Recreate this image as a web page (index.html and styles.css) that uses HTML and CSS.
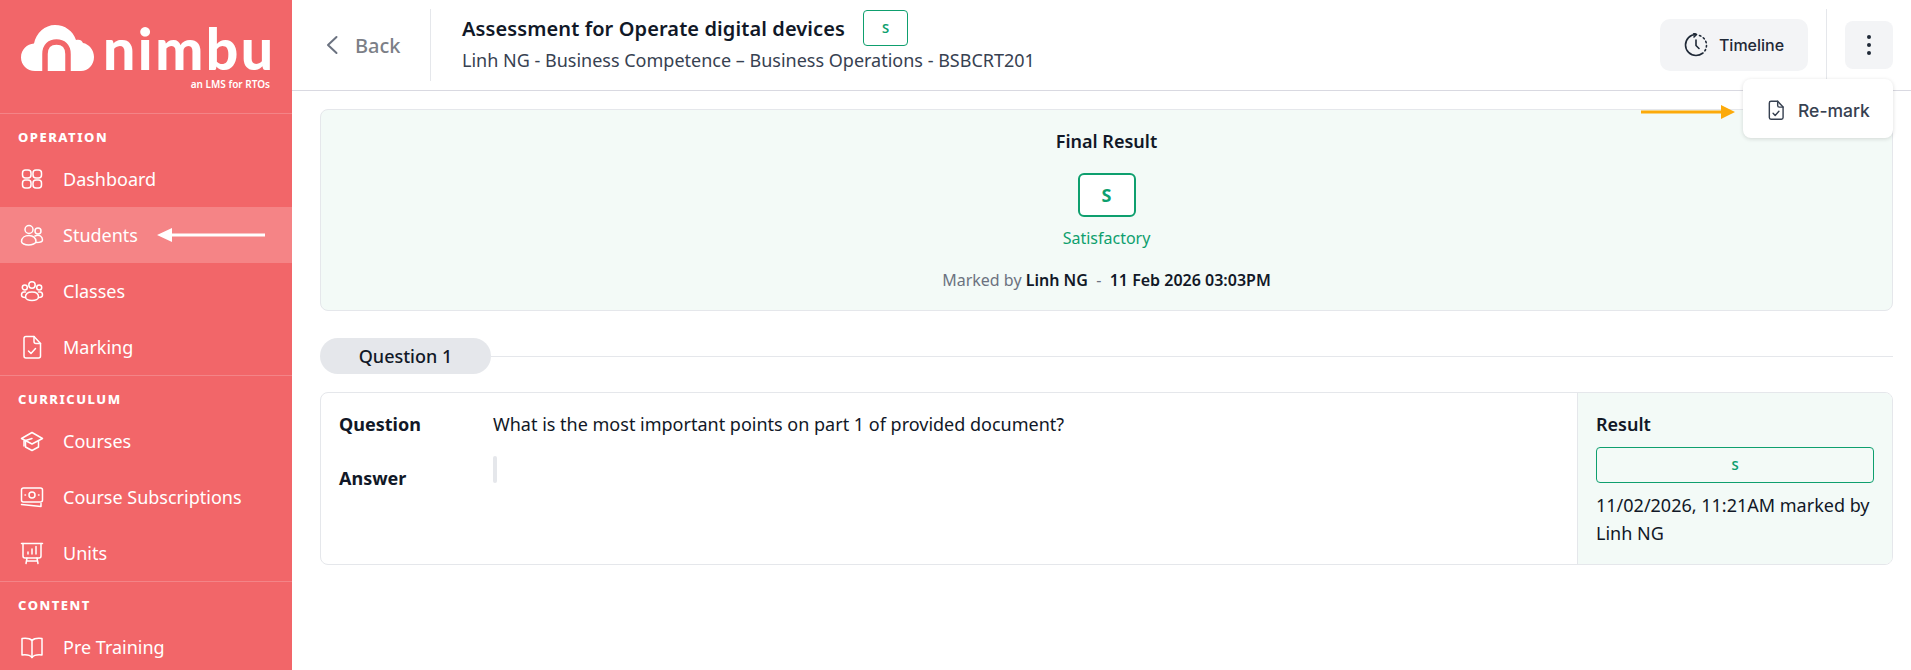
FILE: index.html
```html
<!DOCTYPE html>
<html lang="en">
<head>
<meta charset="utf-8">
<title>Assessment</title>
<link rel="stylesheet" href="styles.css">
</head>
<body>
<div class="app">
  <aside class="sidebar">
    <div class="logo">
      <div class="logo-main">
        <svg class="logo-cloud" viewBox="0 0 73 46" width="73" height="46">
          <path fill="#fff" d="M14 46C6 46 0 40 0 32.500C0 24.500 6 19 13 18.500C15 8 24 0 34 0C44 0 52 6 55 15C58 14 61 15 62 18C68 19 73 25 73 32C73 40 67 46 60 46Z"/>
          <path fill="none" stroke="#f26669" stroke-width="5.500" d="M24 47V29C24 21 29 17 35.500 17C42 17 47 21 47 29V47"/>
        </svg>
        <span class="logo-word">nimbu</span>
      </div>
      <div class="logo-tag">an LMS for RTOs</div>
    </div>

    <section class="nav-section nav-first">
      <h3 class="nav-title">OPERATION</h3>
      <a class="nav-item">
        <svg class="nav-icon" viewBox="0 0 24 24"><rect x="2.500" y="3" width="8.500" height="8" rx="3"/><rect x="13" y="3" width="8.500" height="8" rx="3"/><rect x="2.500" y="13" width="8.500" height="8" rx="3"/><rect x="13" y="13" width="8.500" height="8" rx="3"/></svg>
        <span>Dashboard</span>
      </a>
      <a class="nav-item active">
        <svg class="nav-icon" viewBox="0 0 24 24"><circle cx="9" cy="6.500" r="4"/><circle cx="18" cy="8" r="3"/><path d="M1.500 18.500C1.500 14.500 5 12.500 9 12.500C13 12.500 16 15 16 18.500C16 20.500 12 22 8.500 22C5 22 1.500 20.500 1.500 18.500Z"/><path d="M15 13C17 12 19 12 20.500 13C22 14 22.500 15.500 22.500 17C22.500 18.500 20 19.500 16.500 19.500"/></svg>
        <span>Students</span>
      </a>
      <a class="nav-item">
        <svg class="nav-icon" viewBox="0 0 24 24"><circle cx="12" cy="6" r="3.200"/><circle cx="4.800" cy="8.500" r="2.500"/><circle cx="19.200" cy="8.500" r="2.500"/><path d="M5.500 18C5.500 14.500 8.500 13 12 13C15.500 13 18.500 14.500 18.500 18C18.500 20 15.500 21.500 12 21.500C8.500 21.500 5.500 20 5.500 18Z"/><path d="M5.500 13H4C2.500 13 1.500 14.500 1.500 16C1.500 17.500 3 18.500 5.500 18.500"/><path d="M18.500 13H20C21.500 13 22.500 14.500 22.500 16C22.500 17.500 21 18.500 18.500 18.500"/></svg>
        <span>Classes</span>
      </a>
      <a class="nav-item">
        <svg class="nav-icon" viewBox="0 0 24 24"><path d="M6 1.500H14L20.500 8.500V21C20.500 22 19.500 23 18.500 23H6C5 23 4 22 4 21V3.500C4 2.500 5 1.500 6 1.500Z"/><path d="M14 1.500V6.500C14 7.700 15 8.500 16 8.500H20.500"/><path d="M8.500 16L11 18.500L15.500 13.500"/></svg>
        <span>Marking</span>
      </a>
    </section>

    <section class="nav-section">
      <h3 class="nav-title">CURRICULUM</h3>
      <a class="nav-item">
        <svg class="nav-icon" viewBox="0 0 24 24"><path d="M12 3.500L22.500 9.500L12 15L1.500 9.500Z"/><path d="M5.500 12V18L12 21.500L18.500 18V12"/><path d="M12 9.500L4 12V17"/></svg>
        <span>Courses</span>
      </a>
      <a class="nav-item">
        <svg class="nav-icon" viewBox="0 0 24 24"><rect x="1.500" y="3" width="21" height="14" rx="2"/><circle cx="12" cy="10" r="3"/><path d="M5 10H5.500M18.500 10H19"/><path d="M1.500 19.500L21 21.500V18.500"/></svg>
        <span>Course Subscriptions</span>
      </a>
      <a class="nav-item">
        <svg class="nav-icon" viewBox="0 0 24 24"><path d="M1.500 2.500H22.500"/><path d="M3 2.500V15C3 16 4 17 5 17H19C20 17 21 16 21 15V2.500"/><path d="M8 13V11M12 13V8M16 13V5.500"/><path d="M7 17L6 22.500M17 17L18 22.500M6.500 20H17.500"/></svg>
        <span>Units</span>
      </a>
    </section>

    <section class="nav-section">
      <h3 class="nav-title">CONTENT</h3>
      <a class="nav-item">
        <svg class="nav-icon" viewBox="0 0 24 24"><path d="M12 5.500C10 3.500 6 3 2 3.500V20C6 19.500 10 20 12 22.500C14 20 18 19.500 22 20V3.500C18 3 14 3.500 12 5.500Z"/><path d="M12 5.500V22.500"/></svg>
        <span>Pre Training</span>
      </a>
    </section>
    <svg class="side-arrow" viewBox="0 0 108 14" width="108" height="14"><path fill="#fff" d="M0 7L15 0V5.500H108V8.500H15V14Z"/></svg>
  </aside>

  <main class="main">
    <header class="topbar">
      <a class="back">
        <svg class="back-icon" viewBox="0 0 12 20" width="12" height="20"><path d="M10.500 2L2 10L10.500 18"/></svg>
        <span>Back</span>
      </a>
      <div class="heading">
        <div class="heading-row">
          <h1 class="title">Assessment for Operate digital devices</h1>
          <span class="badge-small">S</span>
        </div>
        <p class="subtitle">Linh NG - Business Competence – Business Operations - BSBCRT201</p>
      </div>
      <button class="timeline-btn">
        <svg class="timeline-icon" viewBox="0 0 24 24" width="24" height="24"><path d="M12 1.500C6 1.500 1.500 6.200 1.500 12C1.500 17.800 6.200 22.500 12 22.500C14.500 22.500 17 21.500 19 20"/><path d="M9.500 0L12.500 1.500L10 4" /><path d="M12 7V12.500L15 15.500"/><path stroke-dasharray="1.500 2.800" d="M15.500 2.500C19.500 4 22.500 7.500 22.500 12C22.500 14.500 21.800 16.500 20.500 18.500"/></svg>
        <span>Timeline</span>
      </button>
      <div class="kebab-wrap">
        <button class="kebab" aria-label="More">
          <i></i><i></i><i></i>
        </button>
      </div>
      <div class="menu">
        <svg class="menu-icon" viewBox="0 0 24 24" width="20" height="20"><path d="M6 1.500H14L20.500 8.500V21C20.500 22 19.500 23 18.500 23H6C5 23 4 22 4 21V3.500C4 2.500 5 1.500 6 1.500Z"/><path d="M14 1.500V6.500C14 7.700 15 8.500 16 8.500H20.500"/><path d="M8.500 16L11 18.500L15.500 13.500"/></svg>
        <span>Re-mark</span>
      </div>
      <svg class="orange-arrow" viewBox="0 0 94 14" width="94" height="14"><path fill="#fcaa0a" d="M0 5.500H80V0L94 7L80 14V8.500H0Z"/></svg>
    </header>

    <div class="content">
      <section class="final">
        <h2 class="final-title">Final Result</h2>
        <div class="badge-large">S</div>
        <div class="final-status">Satisfactory</div>
        <p class="final-meta">Marked by <b>Linh NG</b> &nbsp;-&nbsp; <b>11 Feb 2026 03:03PM</b></p>
      </section>

      <div class="q-head">
        <span class="q-pill">Question 1</span>
        <span class="q-line"></span>
      </div>

      <section class="q-card">
        <div class="q-body">
          <div class="q-row q-row-question">
            <b class="q-label">Question</b>
            <span class="q-text">What is the most important points on part 1 of provided document?</span>
          </div>
          <div class="q-row">
            <b class="q-label q-label-answer">Answer</b>
            <span class="q-quote"></span>
          </div>
        </div>
        <aside class="q-result">
          <b class="result-label">Result</b>
          <div class="badge-wide">S</div>
          <p class="result-note">11/02/2026, 11:21AM marked by Linh NG</p>
        </aside>
      </section>
    </div>
  </main>
</div>
</body>
</html>
```
FILE: styles.css
```css
* { box-sizing: border-box; }
html, body { margin: 0; height: 670px; overflow: hidden; }
body { font-family: "Noto Sans", sans-serif; color: #111827; background: #fff; }
h1, h2, h3, p { margin: 0; }

.app { display: flex; height: 670px; }

.sidebar {
  position: relative;
  flex: 0 0 292px;
  height: 670px;
  overflow: hidden;
  background: #f26669;
  color: #fff;
}
.logo { height: 113px; padding: 25px 22px 0 21px; }
.logo-main { display: flex; align-items: flex-end; gap: 9px; height: 46px; }
.logo-cloud { flex: none; }
.logo-word {
  font-family: "Lato", sans-serif;
  font-weight: 900;
  font-size: 57px;
  line-height: 46px;
  height: 46px;
  letter-spacing: 2.500px;
  color: #fff;
}
.logo-tag { margin-top: 6px; text-align: right; font-size: 10px; line-height: 14px; font-weight: 600; }

.nav-section { border-top: 1px solid rgba(255,255,255,.2); padding-top: 13px; }
.nav-title {
  font-size: 13px;
  line-height: 20px;
  font-weight: 800;
  letter-spacing: 1.500px;
  padding-left: 18px;
  margin-bottom: 4.500px;
}
.nav-item {
  display: flex;
  align-items: center;
  gap: 19px;
  height: 55.800px;
  padding-left: 20px;
  font-size: 18px;
  color: #fff;
}
.nav-item.active { background: #f58486; }
.nav-icon {
  width: 24px;
  height: 24px;
  flex: none;
  fill: none;
  stroke: #fff;
  stroke-width: 1.500;
  stroke-linecap: round;
  stroke-linejoin: round;
}
.side-arrow { position: absolute; left: 157px; top: 228px; }

.main { flex: 1; min-width: 0; }

.topbar {
  position: relative;
  display: flex;
  align-items: center;
  height: 91px;
  border-bottom: 1px solid #d9d9e1;
  padding-right: 18px;
}
.back {
  display: flex;
  align-items: center;
  gap: 17px;
  height: 72px;
  width: 139px;
  padding-left: 34px;
  border-right: 1px solid #e5e7eb;
  font-size: 20px;
  font-weight: 500;
  color: #7c7f87;
}
.back-icon { fill: none; stroke: #6b7280; stroke-width: 2; stroke-linecap: round; stroke-linejoin: round; }
.heading { flex: 1; align-self: flex-start; padding: 10px 0 0 31px; }
.heading-row { display: flex; align-items: center; gap: 18px; }
.title { margin-top: 2px; font-size: 20px; line-height: 34px; font-weight: 600; letter-spacing: .1px; color: #111827; }
.badge-small {
  width: 45px;
  height: 36px;
  display: flex;
  align-items: center;
  justify-content: center;
  border: 1px solid #0e9f6e;
  border-radius: 4px;
  color: #0e9f6e;
  font-size: 13px;
  font-weight: 600;
}
.subtitle { margin-top: 1px; font-size: 18px; line-height: 27px; color: #374151; }

.timeline-btn {
  display: flex;
  align-items: center;
  justify-content: center;
  gap: 11px;
  width: 148px;
  height: 52px;
  border: 0;
  border-radius: 10px;
  background: #f3f4f6;
  font-family: "Inter", sans-serif;
  font-size: 16px;
  font-weight: 500;
  color: #1f2937;
  padding: 0;
}
.timeline-icon { fill: none; stroke: #1f2937; stroke-width: 1.600; stroke-linecap: round; stroke-linejoin: round; }
.kebab-wrap {
  display: flex;
  align-items: center;
  height: 72px;
  margin-left: 18px;
  padding-left: 18px;
  border-left: 1px solid #e5e7eb;
}
.kebab {
  display: flex;
  flex-direction: column;
  align-items: center;
  justify-content: center;
  gap: 4px;
  width: 48px;
  height: 48px;
  border: 0;
  border-radius: 8px;
  background: #f3f4f6;
  padding: 0;
}
.kebab i { width: 4px; height: 4px; border-radius: 50%; background: #1f2937; }

.menu {
  position: absolute;
  right: 18px;
  top: 79px;
  z-index: 3;
  display: flex;
  align-items: center;
  gap: 12px;
  width: 150px;
  height: 59px;
  padding: 3px 0 0 23px;
  background: #fff;
  border-radius: 8px;
  box-shadow: 0 1px 4px rgba(0,0,0,.14);
  font-family: "Inter", sans-serif;
  font-size: 17.500px;
  font-weight: 500;
  color: #374151;
}
.menu-icon { fill: none; stroke: #374151; stroke-width: 1.700; stroke-linecap: round; stroke-linejoin: round; }
.orange-arrow { position: absolute; left: 1349px; top: 105px; z-index: 2; }

.content { padding: 18px 18px 0 28px; }

.final {
  height: 202px;
  border: 1px solid #e5e7eb;
  border-radius: 8px;
  background: #f3faf7;
  display: flex;
  flex-direction: column;
  align-items: center;
  padding-top: 18px;
}
.final-title { font-size: 18px; line-height: 27px; font-weight: 600; color: #111827; }
.badge-large {
  width: 58px;
  height: 44px;
  margin-top: 18px;
  display: flex;
  align-items: center;
  justify-content: center;
  background: #fff;
  border: 2px solid #0e9f6e;
  border-radius: 6px;
  color: #0e9f6e;
  font-size: 18px;
  font-weight: 700;
}
.final-status { margin-top: 9px; font-size: 16px; line-height: 24px; color: #0e9f6e; }
.final-meta { margin-top: 18px; font-size: 16px; line-height: 24px; color: #6b7280; }
.final-meta b { font-weight: 600; color: #111827; }

.q-head { display: flex; align-items: center; margin-top: 27px; }
.q-pill {
  width: 171px;
  height: 36px;
  display: flex;
  align-items: center;
  justify-content: center;
  border-radius: 18px;
  background: #e5e7eb;
  font-size: 18px;
  font-weight: 500;
  color: #111827;
}
.q-line { flex: 1; height: 1px; background: #e5e7eb; }

.q-card {
  display: flex;
  height: 173px;
  margin-top: 18px;
  border: 1px solid #e5e7eb;
  border-radius: 8px;
  overflow: hidden;
}
.q-body { flex: 1; padding: 18px 18px; }
.q-row { display: flex; align-items: flex-start; }
.q-row-question { margin-bottom: 18px; }
.q-label { width: 154px; flex: none; font-size: 18px; line-height: 27px; font-weight: 700; color: #111827; }
.q-label-answer { margin-top: 9px; }
.q-text { font-size: 18px; line-height: 27px; color: #111827; }
.q-quote { width: 4px; height: 27px; border-radius: 2px; background: #e5e7eb; }

.q-result {
  width: 315px;
  flex: none;
  border-left: 1px solid #e5e7eb;
  background: #f3faf7;
  padding: 18px 18px 0 18px;
}
.result-label { display: block; font-size: 18px; line-height: 27px; font-weight: 600; color: #111827; }
.badge-wide {
  height: 36px;
  margin-top: 9px;
  display: flex;
  align-items: center;
  justify-content: center;
  border: 1px solid #0e9f6e;
  border-radius: 4px;
  color: #0e9f6e;
  font-size: 13px;
  font-weight: 600;
}
.result-note { margin-top: 8px; font-size: 18px; line-height: 28px; color: #111827; }
```
